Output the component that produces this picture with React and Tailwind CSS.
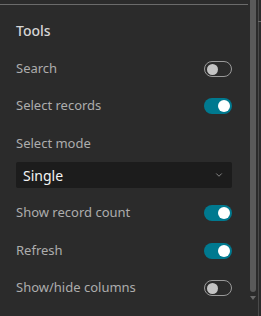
import { ChevronDown } from "lucide-react";

function Toggle({ on }) {
  return (
    <div
      className={`flex items-center w-[28px] h-[16px] rounded-full px-[2px] ${
        on ? "bg-[#00798f] justify-end" : "border border-[#9a9a9a] justify-start"
      }`}
    >
      <span
        className={`block rounded-full ${
          on ? "bg-white w-[12px] h-[12px]" : "bg-[#c4c4c4] w-[11px] h-[11px]"
        }`}
      />
    </div>
  );
}

function Row({ label, on, className = "" }) {
  return (
    <div className={`flex items-center justify-between h-[36px] ${className}`}>
      <span className="text-[13px] text-[#adadad]">{label}</span>
      <Toggle on={on} />
    </div>
  );
}

export default function App() {
  return (
    <div
      className="flex w-[261px] h-[316px] bg-[#2b2b2b] overflow-hidden"
      style={{ fontFamily: '"Noto Sans", "Open Sans", sans-serif' }}
    >
      {/* panel */}
      <div className="w-[248px] flex flex-col">
        <div className="h-[4px]" />
        <div className="h-px bg-[#6b6b6b]" />
        <div className="flex flex-col px-4 w-[248px]">
          <h2 className="mt-[16px] h-[20px] leading-[20px] text-[14px] font-medium text-[#d6d6d6]">
            Tools
          </h2>
          <Row label="Search" on={false} className="mt-[10px]" />
          <Row label="Select records" on={true} className="mt-[1px]" />
          <div className="mt-[9px] h-[20px] leading-[20px] text-[13px] text-[#adadad]">
            Select mode
          </div>
          <div className="mt-[9px] h-[26px] flex items-center justify-between bg-[#1c1c1c] rounded-[2px] pl-[7px] pr-[8px]">
            <span className="text-[14px] text-[#f4f4f4]">Single</span>
            <ChevronDown size={10} strokeWidth={2} className="text-[#9a9a9a]" />
          </div>
          <Row label="Show record count" on={true} className="mt-[7px]" />
          <Row label="Refresh" on={true} className="mt-[2px]" />
          <Row label="Show/hide columns" on={false} className="mt-[1px]" />
        </div>
      </div>

      {/* scrollbar */}
      <div className="w-[2px]" />
      <div className="w-[6px] flex flex-col items-center">
        <div className="w-[6px] h-[292px] bg-[#5a5a5a] rounded-b-[3px]" />
        <div className="mt-[4px] w-0 h-0 border-l-[3px] border-r-[3px] border-t-[4px] border-l-transparent border-r-transparent border-t-[#6a6a6a]" />
      </div>
      <div className="w-[2px]" />
      <div className="w-px bg-[#4a4a4a] relative">
        <div className="absolute top-[21px] left-0 w-[3px] h-px bg-[#6a6a6a]" />
      </div>
    </div>
  );
}
